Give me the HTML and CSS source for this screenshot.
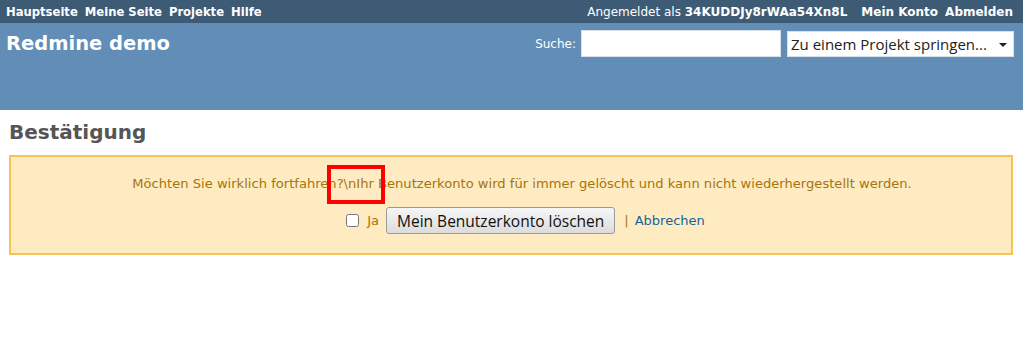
FILE: index.html
```html
<!DOCTYPE html>
<html lang="de">
<head>
    <meta charset="UTF-8">
    <title>Redmine demo</title>
    <link rel="stylesheet" href="styles.css">
</head>
<body>
    <div class="top_menu">
        <ul class="top_menu_links">
            <li><a href="#">Hauptseite</a></li>
            <li><a href="#">Meine Seite</a></li>
            <li><a href="#">Projekte</a></li>
            <li><a href="#">Hilfe</a></li>
        </ul>
        <div class="top_menu_account">
            <span class="logged_as">Angemeldet als <b>34KUDDJy8rWAa54Xn8L</b></span>
            <a href="#">Mein Konto</a>
            <a href="#">Abmelden</a>
        </div>
    </div>

    <div class="header">
        <h1 class="header_title">Redmine demo</h1>
        <div class="quick_search">
            <label class="quick_search_label">Suche:</label>
            <input type="text" class="quick_search_input">
            <div class="project_jump">Zu einem Projekt springen... <span class="project_jump_arrow"></span></div>
        </div>
    </div>

    <main class="content">
        <h2 class="content_title">Bestätigung</h2>

        <div class="warning">
            <p class="warning_text">Möchten Sie wirklich fortfahren?\nIhr Benutzerkonto wird für immer gelöscht und kann nicht wiederhergestellt werden.</p>
            <div class="warning_actions">
                <label class="confirm"><input type="checkbox" class="confirm_box"> Ja</label>
                <button class="delete_btn">Mein Benutzerkonto löschen</button>
                <span class="sep">|</span>
                <a href="#" class="cancel_link">Abbrechen</a>
            </div>
            <!-- annotation box over the escaped newline -->
            <div class="highlight"></div>
        </div>
    </main>
</body>
</html>
```

FILE: styles.css
```css
* {
    margin: 0;
    padding: 0;
    box-sizing: border-box;
}

body {
    font-family: "DejaVu Sans", Verdana, sans-serif;
    font-size: 12px;
    color: #333;
    background: #fff;
}

a {
    text-decoration: none;
}

/* top menu */
.top_menu {
    background: #3e5b76;
    color: #fff;
    height: 23px;
    display: flex;
    justify-content: space-between;
    align-items: center;
    padding: 0 10px 0 6px;
    font-size: 11.6px;
}

.top_menu_links {
    list-style: none;
    display: flex;
    gap: 7px;
}

.top_menu a {
    color: #fff;
    font-weight: bold;
}

.top_menu_account {
    display: flex;
    gap: 7px;
    font-size: 12px;
}

.logged_as {
    margin-right: 7px;
}

/* header */
.header {
    background: #628db6;
    height: 87px;
    display: flex;
    justify-content: space-between;
    align-items: flex-start;
    padding: 0 9px 0 6px;
}

.header_title {
    color: #fff;
    font-size: 19.5px;
    font-weight: bold;
    margin-top: 9px;
}

.quick_search {
    display: flex;
    align-items: center;
    margin-top: 7px;
    color: #fff;
}

.quick_search_label {
    margin-right: 5px;
}

.quick_search_input {
    width: 200px;
    height: 27px;
    border: 1px solid #d7dfe8;
    background: #fff;
}

.project_jump {
    margin-left: 6px;
    width: 227px;
    height: 26px;
    background: #fff;
    border: 1px solid #d7dfe8;
    color: #222;
    font-family: "Open Sans", sans-serif;
    font-size: 15px;
    display: flex;
    align-items: center;
    padding-left: 3px;
    position: relative;
}

.project_jump_arrow {
    position: absolute;
    right: 6px;
    top: 11px;
    border-left: 4px solid transparent;
    border-right: 4px solid transparent;
    border-top: 4px solid #222;
}

/* content */
.content {
    padding: 10px 10px 0 9px;
}

.content_title {
    font-size: 20px;
    font-weight: bold;
    color: #555;
    margin-bottom: 11px;
}

.warning {
    position: relative;
    background: #ffebc1;
    border: 2px solid #f5c453;
    color: #a6750c;
    height: 100px;
    padding-top: 17px;
    text-align: center;
}

.warning_text {
    font-size: 13.1px;
    line-height: 20px;
    padding-left: 22px;
}

.warning_actions {
    display: flex;
    justify-content: center;
    align-items: center;
    margin-top: 13px;
    padding-left: 29px;
    font-size: 13px;
}

.confirm {
    display: flex;
    align-items: center;
    gap: 8px;
}

.confirm_box {
    width: 13px;
    height: 13px;
}

.delete_btn {
    margin-left: 7px;
    height: 27px;
    padding: 0 10px;
    font-family: "Open Sans", sans-serif;
    font-size: 15.5px;
    color: #111;
    border: 1px solid #9a9a9a;
    border-radius: 3px;
    background: linear-gradient(#f6f6f6, #dcdcdc);
}

.sep {
    margin: 0 6px 0 9px;
}

.cancel_link {
    color: #169;
}

.highlight {
    position: absolute;
    left: 316px;
    top: 8px;
    width: 58px;
    height: 39px;
    border: 4px solid #f00;
}
```
